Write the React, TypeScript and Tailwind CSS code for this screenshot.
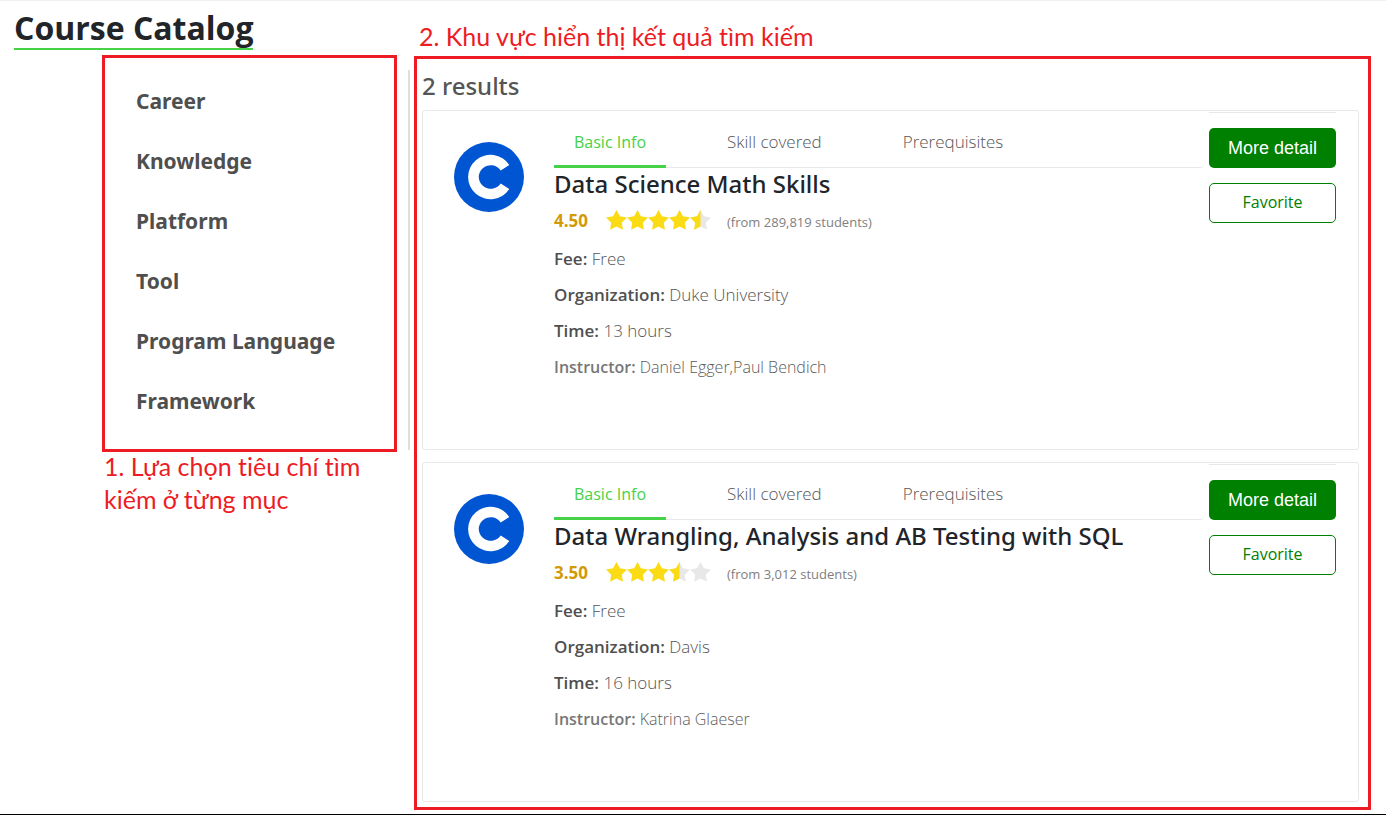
import { useState } from "react";

type Course = {
  title: string;
  rating: number;
  students: string;
  fee: string;
  organization: string;
  time: string;
  instructor: string;
};

const categories = ["Career", "Knowledge", "Platform", "Tool", "Program Language", "Framework"];
const tabs = ["Basic Info", "Skill covered", "Prerequisites"];

const courses: Course[] = [
  {
    title: "Data Science Math Skills",
    rating: 4.5,
    students: "289,819",
    fee: "Free",
    organization: "Duke University",
    time: "13 hours",
    instructor: "Daniel Egger,Paul Bendich",
  },
  {
    title: "Data Wrangling, Analysis and AB Testing with SQL",
    rating: 3.5,
    students: "3,012",
    fee: "Free",
    organization: "Davis",
    time: "16 hours",
    instructor: "Katrina Glaeser",
  },
];

const STAR =
  "M0-10.5L3.3-4.4L9.99-3.24L5.1 1.7L6.17 8.49L0 5.4L-6.17 8.49L-5.1 1.7L-9.99-3.24L-3.3-4.4Z";
const LEFT_HALF = "M0-10.5L0 5.4L-6.17 8.49L-5.1 1.7L-9.99-3.24L-3.3-4.4Z";

function Star({ value }: { value: number }) {
  return (
    <svg viewBox="-10 -10.5 20 19.2" className="h-5 w-[21px]" aria-hidden="true">
      <path d={STAR} fill={value >= 1 ? "#fadb14" : "#e8e8e8"} />
      {value > 0 && value < 1 && <path d={LEFT_HALF} fill="#fadb14" />}
    </svg>
  );
}

function ProviderLogo() {
  return (
    <svg viewBox="0 0 70 70" className="mt-[31px] size-[70px] shrink-0" role="img" aria-label="Coursera">
      <circle cx="35" cy="35" r="35" fill="#0056d2" />
      <path
        d="M55.3 22.9A22.4 22.2 0 1 0 55.3 47.1L46.7 41.6A12 11.8 0 1 1 46.7 28.4Z"
        fill="#fff"
      />
    </svg>
  );
}

function Field({ label, value, muted }: { label: string; value: string; muted?: boolean }) {
  return (
    <p className={muted ? "text-base leading-9 text-[#777]" : "text-[17px] leading-9 text-[#555]"}>
      <strong className={muted ? "font-semibold" : "font-semibold text-[#4f4f4f]"}>{label}:</strong>{" "}
      <span className={muted ? "font-light text-[#5c5c5c]" : "font-light"}>{value}</span>
    </p>
  );
}

function CourseCard({ course }: { course: Course }) {
  const [active, setActive] = useState(0);
  return (
    <article className="flex min-h-[340px] rounded-[3px] border border-[#e8e8e8] pr-[22px] pl-[31px]">
      <ProviderLogo />
      <div className="ml-[30px] min-w-0 flex-1">
        <div role="tablist" className="flex h-[57px] gap-[41px] border-b border-[#e8e8e8] pt-3">
          {tabs.map((tab, i) => (
            <button
              key={tab}
              type="button"
              role="tab"
              aria-selected={i === active}
              onClick={() => setActive(i)}
              className={
                i === active
                  ? "-mb-px border-b-[3px] border-[#46d246] px-5 pb-1 text-base text-[#46d246]"
                  : "-mb-px border-b-[3px] border-transparent px-5 pb-1 text-[17px] font-light text-[#555]"
              }
            >
              {tab}
            </button>
          ))}
        </div>
        <h3 className="font-['Noto_Sans','Open_Sans',sans-serif] text-2xl leading-8 font-medium text-[#212529]">
          {course.title}
        </h3>
        <div className="flex h-[41px] items-center">
          <span className="w-[52px] text-[17px] font-bold text-[#d29a05]">{course.rating.toFixed(2)}</span>
          <span className="flex pb-px" role="img" aria-label={`${course.rating} of 5 stars`}>
            {[0, 1, 2, 3, 4].map((n) => (
              <Star key={n} value={course.rating - n} />
            ))}
          </span>
          <span className="mt-1 ml-4 text-[13px] text-[#808080]">(from {course.students} students)</span>
        </div>
        <Field label="Fee" value={course.fee} />
        <Field label="Organization" value={course.organization} />
        <Field label="Time" value={course.time} />
        <Field label="Instructor" value={course.instructor} muted />
      </div>
      <div className="mt-px ml-[7px] flex w-[127px] shrink-0 flex-col gap-[15px] border-t border-[#e8e8e8] pt-[15px]">
        <button
          type="button"
          className="h-10 rounded-[5px] bg-[#008000] font-['Liberation_Sans',sans-serif] text-lg text-white"
        >
          More detail
        </button>
        <button
          type="button"
          className="h-10 rounded-[5px] border border-[#008000] pb-0.5 text-base text-[#008000]"
        >
          Favorite
        </button>
      </div>
    </article>
  );
}

export default function App() {
  return (
    <div className="flex min-h-screen flex-col border-t border-b border-t-[#f0f0f0] border-b-black bg-white font-['Open_Sans','Noto_Sans',sans-serif]">
      <div className="flex flex-1 items-start">
        <aside className="w-[414px] shrink-0">
          <h1 className="mt-[7px] ml-[14px] inline-block border-b-2 border-[#46d246] text-[32px] leading-10 font-bold text-[#212529]">
            Course Catalog
          </h1>
          <div className="mt-[5px] flex pl-[102px]">
            <nav className="w-[295px] border-[3px] border-[#ed1c24] pt-[13px] pb-[18px] pl-[31px]">
              <ul>
                {categories.map((name) => (
                  <li key={name}>
                    <a
                      href="#"
                      className="block font-['Noto_Sans','Open_Sans',sans-serif] text-[21px] leading-[60px] font-bold text-[#4f4f4f]"
                    >
                      {name}
                    </a>
                  </li>
                ))}
              </ul>
            </nav>
            <div className="mt-[15px] mb-0.5 ml-[11px] w-0.5 bg-[#dedede]" />
          </div>
          <p className="-mt-0.5 ml-[104px] w-[270px] font-['Lato','Noto_Sans',sans-serif] text-[25px] leading-[33px] text-[#ed1c24] [font-variant-ligatures:none]">
            1. Lựa chọn tiêu chí tìm kiếm ở từng mục
          </p>
        </aside>
        <main className="mr-[15px] min-w-0 flex-1 pt-[18px]">
          <p className="mb-0.5 ml-[5px] font-['Lato','Noto_Sans',sans-serif] text-[25px] leading-[35px] text-[#ed1c24] [font-variant-ligatures:none]">
            2. Khu vực hiển thị kết quả tìm kiếm
          </p>
          <section className="border-[3px] border-[#ed1c24] pt-[9px] pr-[9px] pb-[5px] pl-[5px]">
            <h2 className="mb-[7px] font-['Noto_Sans','Open_Sans',sans-serif] text-2xl leading-[35px] font-medium text-[#555]">
              2 results
            </h2>
            <div className="flex flex-col gap-3">
              {courses.map((course) => (
                <CourseCard key={course.title} course={course} />
              ))}
            </div>
          </section>
        </main>
      </div>
    </div>
  );
}
